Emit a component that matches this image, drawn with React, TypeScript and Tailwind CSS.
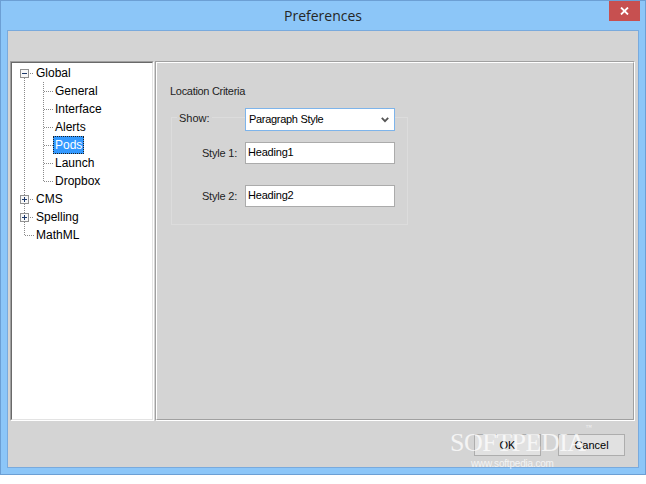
import React from 'react';

type Link = 'root-open' | 'root-closed' | 'root-last' | 'child' | 'child-last';

interface TreeRow {
  label: string;
  link: Link;
  selected?: boolean;
}

const rows: TreeRow[] = [
  { label: 'Global', link: 'root-open' },
  { label: 'General', link: 'child' },
  { label: 'Interface', link: 'child' },
  { label: 'Alerts', link: 'child' },
  { label: 'Pods', link: 'child', selected: true },
  { label: 'Launch', link: 'child' },
  { label: 'Dropbox', link: 'child-last' },
  { label: 'CMS', link: 'root-closed' },
  { label: 'Spelling', link: 'root-closed' },
  { label: 'MathML', link: 'root-last' },
];

const dots = {
  stroke: '#8a8a8a',
  strokeWidth: 1,
  strokeDasharray: '1 1',
  shapeRendering: 'crispEdges' as const,
};

function Connector({ link }: { link: Link }) {
  const isRoot = link.startsWith('root');
  const width = isRoot ? 22 : 41;

  return (
    <svg width={width} height={18} className="shrink-0">
      {/* stem of the top level */}
      {link === 'root-open' && <line x1={12.5} y1={14} x2={12.5} y2={18} {...dots} />}
      {link === 'root-closed' && (
        <>
          <line x1={12.5} y1={0} x2={12.5} y2={5} {...dots} />
          <line x1={12.5} y1={14} x2={12.5} y2={18} {...dots} />
        </>
      )}
      {link === 'root-last' && <line x1={12.5} y1={0} x2={12.5} y2={10} {...dots} />}
      {!isRoot && <line x1={12.5} y1={0} x2={12.5} y2={18} {...dots} />}

      {link === 'root-last' && <line x1={13} y1={9.5} x2={22} y2={9.5} {...dots} />}
      {(link === 'root-open' || link === 'root-closed') && (
        <>
          <line x1={18} y1={9.5} x2={22} y2={9.5} {...dots} />
          <rect x={8.5} y={5.5} width={8} height={8} fill="#f8f8f8" stroke="#919191" shapeRendering="crispEdges" />
          <line x1={10} y1={9.5} x2={15} y2={9.5} stroke="#1e3a6b" shapeRendering="crispEdges" />
          {link === 'root-closed' && (
            <line x1={12.5} y1={7} x2={12.5} y2={12} stroke="#1e3a6b" shapeRendering="crispEdges" />
          )}
        </>
      )}

      {/* children */}
      {link === 'child' && <line x1={31.5} y1={0} x2={31.5} y2={18} {...dots} />}
      {link === 'child-last' && <line x1={31.5} y1={0} x2={31.5} y2={10} {...dots} />}
      {!isRoot && <line x1={32} y1={9.5} x2={41} y2={9.5} {...dots} />}
    </svg>
  );
}

function Tree() {
  return (
    <div className="w-[144px] h-[360px] border border-[#a0a0a0] border-r-white border-b-white">
      <div className="h-full border border-[#696969] border-r-[#e3e3e3] border-b-[#e3e3e3] bg-white pt-[1px] pl-0">
        {rows.map(row => (
          <div key={row.label} className="flex h-[18px] items-stretch">
            <Connector link={row.link} />
            <span
              className={`px-[1px] border leading-[16px] text-[12px] ${
                row.selected
                  ? 'bg-[#3399ff] text-white border-dotted border-[#202020]'
                  : 'text-black border-transparent'
              }`}
            >
              {row.label}
            </span>
          </div>
        ))}
      </div>
    </div>
  );
}

function Field({ label, value }: { label: string; value: string }) {
  return (
    <div className="flex items-center h-[22px]">
      <div className="w-[73px] pr-[8px] text-right text-[#1e1e1e] tracking-[-0.2px]">{label}</div>
      <div className="w-[150px] h-[22px] border border-[#ababab] bg-white pl-[2px] pt-[3px] leading-[13px] tracking-[-0.2px]">
        {value}
      </div>
    </div>
  );
}

function PodsPanel() {
  return (
    <div className="flex-1 h-[360px] border border-[#a0a0a0] border-r-white border-b-white">
      <div className="h-full border border-white border-r-[#a0a0a0] border-b-[#a0a0a0] pl-[13px] pt-[22px] text-[11px] leading-[13px]">
        <div className="h-[13px] text-[#1e1e1e] tracking-[-0.3px]">Location Criteria</div>

        <div className="mt-[19px] ml-[1px] w-[237px] border border-[#dcdcdc] pb-[17px]">
          <div className="-mt-[10px] flex h-[23px]">
            <div className="w-[73px]">
              <span className="inline-block ml-[5px] mt-[4px] px-[2px] bg-[#d4d4d4] text-[#1e1e1e]">Show:</span>
            </div>
            <div className="w-[150px] h-[23px] border border-[#7eb4ea] bg-white flex items-center justify-between pl-[3px] pr-[5px]">
              <span className="tracking-[-0.3px]">Paragraph Style</span>
              <svg width="8" height="6" viewBox="0 0 8 6">
                <polyline points="0.8,0.8 4,4.2 7.2,0.8" fill="none" stroke="#555555" strokeWidth="1.8" />
              </svg>
            </div>
          </div>

          <div className="mt-[11px]">
            <Field label="Style 1:" value="Heading1" />
          </div>
          <div className="mt-[21px]">
            <Field label="Style 2:" value="Heading2" />
          </div>
        </div>
      </div>
    </div>
  );
}

export default function App() {
  return (
    <div
      className="relative w-[646px] h-[484px] bg-white overflow-hidden"
      style={{ fontFamily: "'Liberation Sans', Arial, sans-serif" }}
    >
      <div className="h-[475px] border border-[#6c9fd4] bg-[#8cc6f8] flex flex-col">
        <div className="relative h-[29px] flex items-center justify-center">
          <span
            className="text-[14px] text-[#262626]"
            style={{ fontFamily: "'Open Sans', 'Noto Sans', sans-serif" }}
          >
            Preferences
          </span>
          <div className="absolute right-[5px] top-0 w-[31px] h-[20px] bg-[#c75050] flex items-center justify-center">
            <svg width="9" height="8" viewBox="0 0 9 8">
              <path d="M1 0.5 L8 7.5 M8 0.5 L1 7.5" stroke="white" strokeWidth="1.8" />
            </svg>
          </div>
        </div>

        <div className="mx-[6px] h-[438px] border border-[#79aadd] bg-[#d4d4d4] flex flex-col">
          <div className="flex pt-[30px] pl-[2px] pr-[3px] gap-[1px]">
            <Tree />
            <PodsPanel />
          </div>

          <div className="flex justify-end gap-[17px] pt-[13px] pr-[13px] text-[11px]">
            <button className="w-[67px] h-[22px] border border-[#adadad] bg-[#e1e1e1] text-black">OK</button>
            <button className="w-[67px] h-[22px] border border-[#adadad] bg-[#e1e1e1] text-black">Cancel</button>
          </div>
        </div>
      </div>

      {/* watermark */}
      <div
        className="pointer-events-none absolute left-[450px] top-[430px] text-[26px] leading-[26px] tracking-[-0.5px] text-white/75"
        style={{ fontFamily: "'Liberation Serif', 'Times New Roman', serif" }}
      >
        SOFTPEDIA<sup className="text-[6px] align-top">™</sup>
      </div>
      <div className="pointer-events-none absolute left-[471px] top-[459px] text-[10px] leading-[10px] text-white/75 tracking-[-0.2px]">
        www.softpedia.com
      </div>
    </div>
  );
}
